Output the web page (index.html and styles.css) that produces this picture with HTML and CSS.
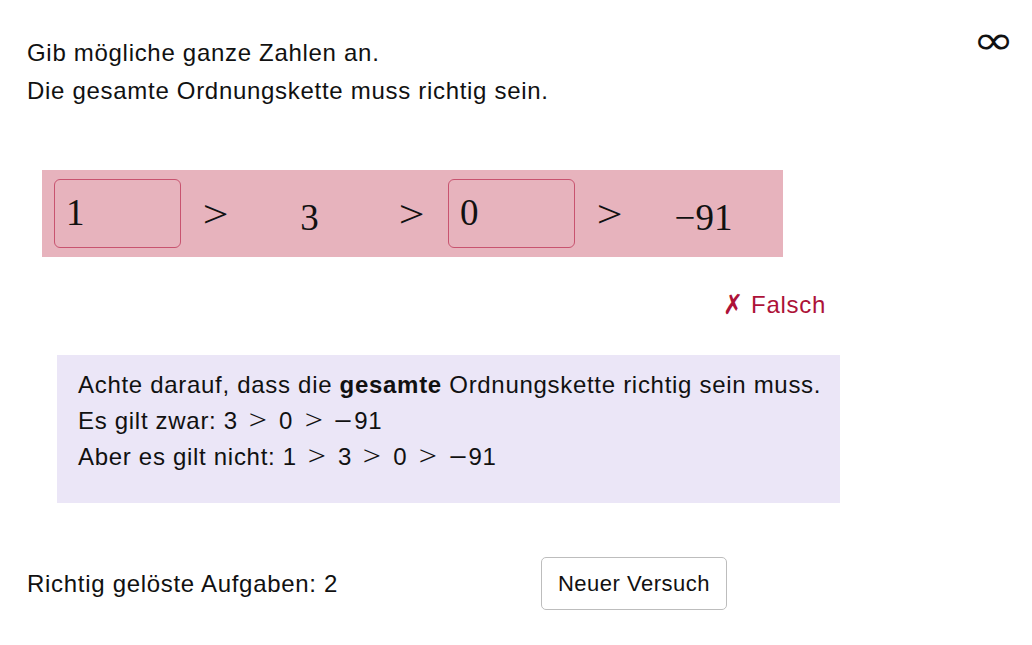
FILE: index.html
```html
<!DOCTYPE html>
<html lang="de">
<head>
<meta charset="utf-8">
<title>Ordnungskette</title>
<link rel="stylesheet" href="styles.css">
</head>
<body>
<div class="page">
  <header class="head">
    <p class="instr">Gib mögliche ganze Zahlen an.<br>Die gesamte Ordnungskette muss richtig sein.</p>
    <span class="inf">∞</span>
  </header>

  <div class="chain">
    <div class="field">1</div>
    <div class="op">&gt;</div>
    <div class="num">3</div>
    <div class="op">&gt;</div>
    <div class="field">0</div>
    <div class="op">&gt;</div>
    <div class="num">−91</div>
  </div>

  <div class="verdict"><span class="cross">✗</span> Falsch</div>

  <div class="hint">
    <p>Achte darauf, dass die <b>gesamte</b> Ordnungskette richtig sein muss.</p>
    <p>Es gilt zwar: 3 <span class="rel">&gt;</span> 0 <span class="rel">&gt;</span> <span class="minus">−</span>91</p>
    <p>Aber es gilt nicht: 1 <span class="rel">&gt;</span> 3 <span class="rel">&gt;</span> 0 <span class="rel">&gt;</span> <span class="minus">−</span>91</p>
  </div>

  <div class="foot">
    <span class="score">Richtig gelöste Aufgaben: 2</span>
    <button class="retry" type="button">Neuer Versuch</button>
  </div>
</div>
</body>
</html>
```
FILE: styles.css
```css
* { box-sizing: border-box; }
html, body { margin: 0; padding: 0; background: #fff; }
body {
  font-family: "Liberation Sans", Arial, sans-serif;
  font-size: 24px;
  letter-spacing: 0.7px;
  color: #111;
}
.page {
  padding: 34px 22px 0 27px;
}
.head {
  display: flex;
  justify-content: space-between;
  align-items: flex-start;
}
.instr {
  margin: 0;
  line-height: 38px;
}
.inf {
  font-family: "DejaVu Sans", sans-serif;
  font-size: 40px;
  line-height: 20px;
  letter-spacing: 0;
  margin-top: -4px;
  transform: scaleX(1.25);
}
.chain {
  margin: 60px 0 0 15px;
  width: 741px;
  height: 87px;
  background: #e7b3bd;
  display: flex;
  align-items: center;
  padding: 0 12px;
  font-family: "Liberation Serif", "Times New Roman", serif;
  font-size: 37px;
  letter-spacing: 0;
}
.field {
  width: 127px;
  height: 69px;
  border: 1.5px solid #c8536f;
  border-radius: 6px;
  padding: 0 0 3px 11px;
  display: flex;
  align-items: center;
}
.op {
  width: 69px;
  text-align: center;
  font-size: 38px;
  font-weight: 300;
  transform: scaleX(1.2);
}
.num {
  width: 127px;
  text-align: center;
  padding-right: 8px;
  padding-top: 8px;
}
.op + .field { margin-left: 2px; }
.verdict {
  margin-top: 33px;
  width: 799px;
  line-height: 30px;
  text-align: right;
  color: #ad1238;
}
.cross {
  font-family: "DejaVu Sans", sans-serif;
  font-weight: bold;
  display: inline-block;
  transform: scaleY(1.15);
}
.hint {
  margin: 35px 0 0 30px;
  width: 783px;
  background: #ebe6f7;
  padding: 12px 0 28px 21px;
}
.hint p {
  margin: 0;
  line-height: 36px;
  white-space: nowrap;
}
.hint b { font-weight: bold; }
.rel {
  font-family: "Liberation Serif", serif;
  font-size: 28px;
  line-height: 20px;
  display: inline-block;
  transform: scaleX(1.15);
  margin: 0 5px;
}
.minus {
  display: inline-block;
  transform: scaleX(1.3);
  margin: 0 3px 0 2px;
}
.foot {
  margin-top: 54px;
  display: flex;
  align-items: center;
}
.score {
  width: 514px;
}
.retry {
  width: 186px;
  height: 53px;
  background: #fff;
  border: 1px solid #bdbdbd;
  border-radius: 5px;
  font-family: "Liberation Sans", Arial, sans-serif;
  font-size: 22px;
  letter-spacing: 0.5px;
  color: #111;
  padding: 0;
}
```
